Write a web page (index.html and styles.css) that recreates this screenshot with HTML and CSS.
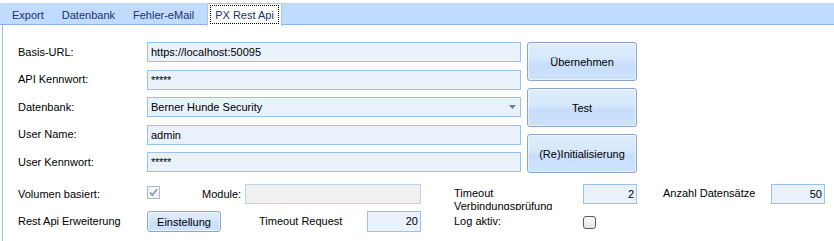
FILE: index.html
```html
<!DOCTYPE html>
<html lang="de">
<head>
  <meta charset="UTF-8" />
  <title>PX Rest Api</title>
  <link rel="stylesheet" href="styles.css">
</head>
<body>
  <div class="tabs">
    <span class="tab">Export</span>
    <span class="tab">Datenbank</span>
    <span class="tab">Fehler-eMail</span>
    <span class="tab active"><span class="focus">PX Rest Api</span></span>
  </div>

  <div class="panel">
    <div class="top">
      <div class="fields">
        <span class="lbl">Basis-URL:</span>
        <div class="input">https://localhost:50095</div>
        <span class="lbl">API Kennwort:</span>
        <div class="input pw">*****</div>
        <span class="lbl">Datenbank:</span>
        <div class="input combo">
          <span>Berner Hunde Security</span>
          <svg class="arrow" width="7" height="4" viewBox="0 0 7 4"><polygon points="0,0 7,0 3.5,4" fill="#5f7fae"/></svg>
        </div>
        <span class="lbl">User Name:</span>
        <div class="input">admin</div>
        <span class="lbl">User Kennwort:</span>
        <div class="input pw">*****</div>
      </div>
      <div class="buttons">
        <button class="btn big">Übernehmen</button>
        <button class="btn big">Test</button>
        <button class="btn big">(Re)Initialisierung</button>
      </div>
    </div>

    <div class="row r1">
      <span class="lbl w129">Volumen basiert:</span>
      <span class="chk-cell">
        <svg width="13" height="13" viewBox="0 0 13 13">
          <rect x="0.5" y="0.5" width="12" height="12" fill="#f3f4f6" stroke="#b4b8bf"/>
          <path d="M3 6.5 L5.3 9 L10 3.2" fill="none" stroke="#8c9cb8" stroke-width="1.8"/>
        </svg>
      </span>
      <span class="lbl w43">Module:</span>
      <div class="input disabled w176"></div>
      <span class="lbl two-line">Timeout<br>Verbindungsprüfung</span>
      <div class="input num w54">2</div>
      <span class="lbl anzahl">Anzahl Datensätze</span>
      <div class="input num w54">50</div>
    </div>

    <div class="row r2">
      <span class="lbl w129">Rest Api Erweiterung</span>
      <button class="btn small">Einstellung</button>
      <span class="lbl treq">Timeout Request</span>
      <div class="input num w54">20</div>
      <span class="lbl log">Log aktiv:</span>
      <svg class="chk-off" width="13" height="13" viewBox="0 0 13 13">
        <defs>
          <linearGradient id="cb" x1="0" y1="0" x2="0" y2="1">
            <stop offset="0" stop-color="#fafafa"/>
            <stop offset="1" stop-color="#e6e6e6"/>
          </linearGradient>
        </defs>
        <rect x="0.5" y="0.5" width="12" height="12" rx="2.5" fill="url(#cb)" stroke="#5b5b5b"/>
      </svg>
    </div>
  </div>
</body>
</html>
```

FILE: styles.css
```css
html, body {
  margin: 0;
  background: #fff;
  font-family: "Liberation Sans", Arial, sans-serif;
  font-size: 11px;
  color: #000;
  overflow: hidden;
}

/* tab strip */
.tabs {
  display: flex;
  margin-top: 3px;
  padding-left: 3px;
  height: 21px;
  background: #bfdbff;
  border-bottom: 1px solid #8db2e3;
}

.tab {
  padding: 3px 9px 0;
  line-height: 18px;
  color: #1f2f6b;
}

.tab.active {
  margin-left: 4px;
  padding: 1px 2px 0;
  height: 21px;
  background: #fff;
  border: 1px solid #a9c8ee;
  border-bottom: none;
  border-radius: 2px 2px 0 0;
}

.tab .focus {
  display: block;
  padding: 1px 4px 0;
  line-height: 16px;
  border: 1px dotted #000;
}

/* panel */
.panel {
  margin-left: 2px;
  border-left: 1px solid #99bde9;
  padding: 17px 0 20px 15px;
}

.top {
  display: flex;
  align-items: flex-start;
}

.fields {
  display: grid;
  grid-template-columns: 129px 374px;
  grid-auto-rows: 20px;
  row-gap: 7.5px;
  align-items: center;
}

.lbl {
  line-height: 13px;
  white-space: nowrap;
}

.input {
  box-sizing: border-box;
  height: 20px;
  padding: 0 3px;
  line-height: 18px;
  background: #e9f1fb;
  border: 1px solid #97c3f3;
  white-space: nowrap;
}

.input.pw {
  letter-spacing: -0.3px;
}

.input.combo {
  display: flex;
  justify-content: space-between;
  align-items: center;
}

.input.combo .arrow {
  margin-right: 1px;
}

.input.disabled {
  background: #f0f0f0;
  border-color: #b9d5f3;
}

.input.num {
  text-align: right;
  padding-right: 2px;
}

.buttons {
  display: flex;
  flex-direction: column;
  gap: 7px;
  margin-left: 6px;
}

.btn {
  box-sizing: border-box;
  font-family: inherit;
  font-size: 11px;
  color: #000;
  border: 1px solid #8aa6d0;
  border-radius: 3px;
  background: linear-gradient(#e0eefd 0%, #d5e7fc 45%, #c8ddf9 55%, #cde2fb 100%);
  box-shadow: inset 0 0 0 1px rgba(255, 255, 255, 0.55);
  padding: 0;
}

.btn.big {
  width: 110px;
  height: 39px;
}

.btn.small {
  width: 74px;
  height: 21px;
}

/* bottom rows */
.row {
  display: flex;
  align-items: center;
}

.r1 {
  margin-top: 11px;
  height: 20px;
}

.r2 {
  margin-top: 7px;
  height: 21px;
}

.r2 .input {
  height: 21px;
  line-height: 19px;
}

.w129 { width: 129px; }
.w43 { width: 43px; }
.w54 { width: 54px; }
.w176 { width: 176px; }

.chk-cell {
  width: 55px;
  align-self: flex-start;
  margin-top: 2px;
  height: 13px;
}

.chk-cell svg {
  display: block;
}

.two-line {
  width: 129px;
  margin-left: 33px;
  height: 23px;
  overflow: hidden;
  align-self: flex-start;
  margin-top: 3px;
}

.anzahl {
  width: 108px;
  margin-left: 26px;
  margin-top: -2px;
}

.treq {
  width: 108px;
  margin-left: 38px;
}

.log {
  width: 129px;
  margin-left: 33px;
}

.chk-off {
  display: block;
  margin-top: 1px;
}
```
